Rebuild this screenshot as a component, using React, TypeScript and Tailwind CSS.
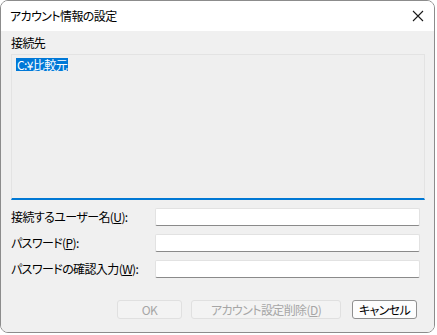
const font = "[font-family:'Noto_Sans_CJK_JP',sans-serif] [font-feature-settings:'palt'] tracking-[-0.6px]";

const fields = [
  { label: "接続するユーザー名", key: "U" },
  { label: "パスワード", key: "P" },
  { label: "パスワードの確認入力", key: "W" },
];

export default function App() {
  return (
    <div className={`w-[437px] h-[335px] bg-white ${font} text-[12px] text-black`}>
      <div className="w-[435px] h-[333px] border border-[#8c8c8c] rounded-[8px] overflow-hidden flex flex-col">
        {/* title bar */}
        <div className="h-[30px] bg-white flex items-center justify-between pl-[9px] pr-[9px]">
          <span className="leading-[16px]">アカウント情報の設定</span>
          <svg width="12" height="12" viewBox="0 0 12 12" className="mr-[1px]">
            <path d="M1 1 L11 11 M11 1 L1 11" stroke="#1a1a1a" strokeWidth="1.1" />
          </svg>
        </div>

        <div className="flex-1 bg-[#f0f0f0] pl-[10px] pt-[4px] flex flex-col">
          <div className="leading-[16px]">接続先</div>
          <div className="mt-[3px] w-[414px] h-[146px] border border-[#e3e3e3] border-b-2 border-b-[#0078d4] bg-[#efefef] pt-[1px] pl-[4px]">
            <span className="inline-block h-[13px] leading-[13px] px-[1px] bg-[#0078d7] text-white">C:¥比較元</span>
          </div>

          <div className="mt-[8px] flex flex-col gap-[8px]">
            {fields.map((f) => (
              <div key={f.key} className="flex items-center h-[18px]">
                <span className="w-[144px] leading-[16px]">
                  {f.label}(<span className="underline">{f.key}</span>):
                </span>
                <div className="w-[265px] h-[18px] bg-white border border-[#e2e2e2] border-b-[#8a8a8a] rounded-[2px]" />
              </div>
            ))}
          </div>

          <div className="mt-[22px] flex pl-[106px]">
            <button className="w-[65px] h-[19px] rounded-[3px] border border-[#e0e0e0] bg-[#f3f3f3] text-[#a6a6a6] leading-[16px]">
              OK
            </button>
            <button className="ml-[9px] w-[150px] h-[19px] rounded-[3px] border border-[#e0e0e0] bg-[#f3f3f3] text-[#a6a6a6] leading-[16px]">
              アカウント設定削除(<span className="underline">D</span>)
            </button>
            <button className="ml-[11px] w-[65px] h-[19px] rounded-[3px] border border-[#8f8f8f] bg-[#fdfdfd] leading-[16px]">
              キャンセル
            </button>
          </div>
        </div>
      </div>
    </div>
  );
}
